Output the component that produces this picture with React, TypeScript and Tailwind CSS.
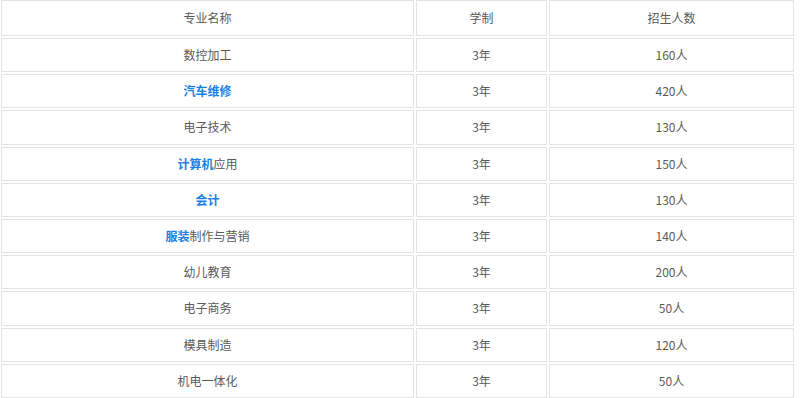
import React from 'react';

type Row = { name: React.ReactNode; years: string; count: string };

const Hl: React.FC<{ children: React.ReactNode }> = ({ children }) => (
  <span className="font-bold text-[#1a7fe6]">{children}</span>
);

const rows: Row[] = [
  { name: '数控加工', years: '3年', count: '160人' },
  { name: <Hl>汽车维修</Hl>, years: '3年', count: '420人' },
  { name: '电子技术', years: '3年', count: '130人' },
  { name: <><Hl>计算机</Hl>应用</>, years: '3年', count: '150人' },
  { name: <Hl>会计</Hl>, years: '3年', count: '130人' },
  { name: <><Hl>服装</Hl>制作与营销</>, years: '3年', count: '140人' },
  { name: '幼儿教育', years: '3年', count: '200人' },
  { name: '电子商务', years: '3年', count: '50人' },
  { name: '模具制造', years: '3年', count: '120人' },
  { name: '机电一体化', years: '3年', count: '50人' },
];

const cell = 'h-[34.2px] border border-[#e3e3e3] text-center align-middle p-0';
const head = 'h-[36px] border border-[#e3e3e3] text-center align-middle p-0';

const App: React.FC = () => {
  return (
    <div className="w-[800px] h-[398px] overflow-hidden bg-white text-[12px] text-[#5a5a5a] font-['Noto_Sans_CJK_SC','Liberation_Sans',sans-serif]">
      <table className="w-[797px] border-separate border-spacing-[2px] -mt-[2px] -ml-[1px] table-fixed">
        <colgroup>
          <col className="w-[413px]" />
          <col className="w-[131px]" />
          <col />
        </colgroup>
        <tbody>
          <tr>
            <td className={head}>专业名称</td>
            <td className={head}>学制</td>
            <td className={head}>招生人数</td>
          </tr>
          {rows.map((r, i) => (
            <tr key={i}>
              <td className={cell}>{r.name}</td>
              <td className={cell}>{r.years}</td>
              <td className={cell}>{r.count}</td>
            </tr>
          ))}
        </tbody>
      </table>
    </div>
  );
};

export default App;
